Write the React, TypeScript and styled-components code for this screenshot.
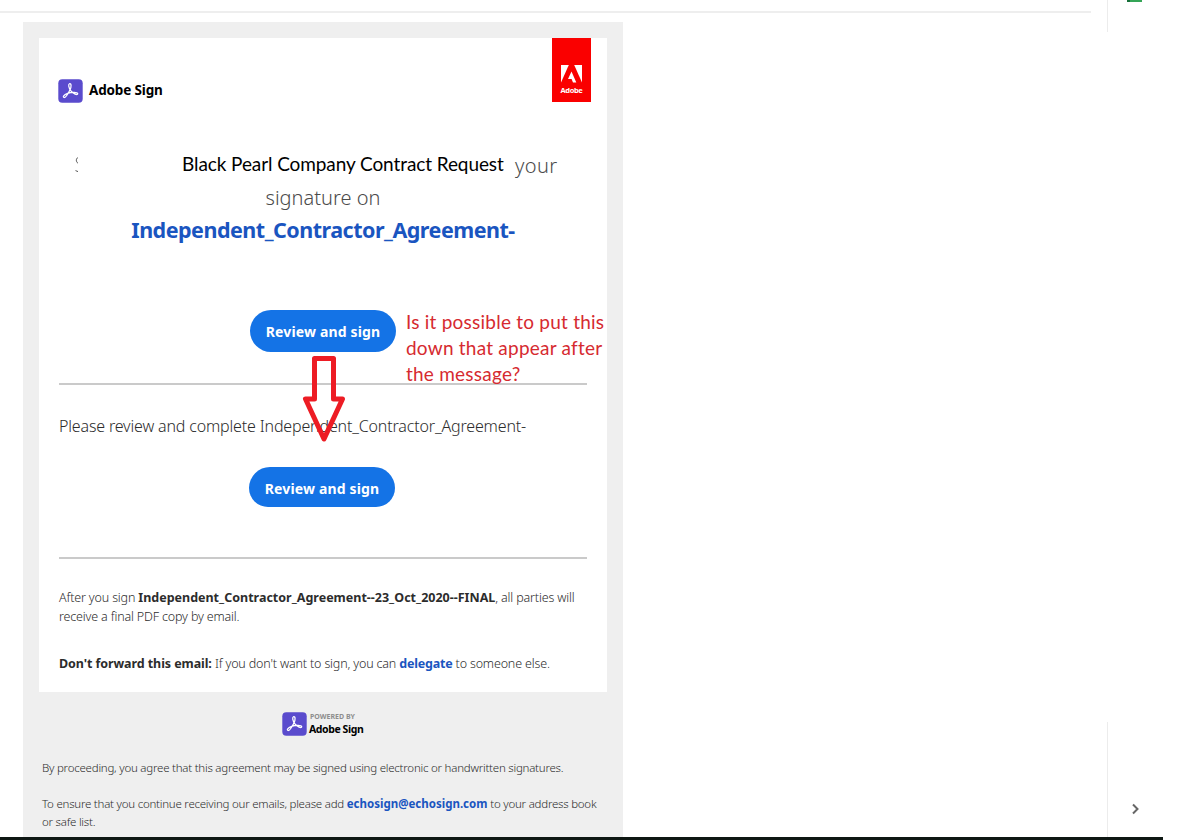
import React from 'react';
import styled, { createGlobalStyle } from 'styled-components';

const GlobalStyle = createGlobalStyle`
  * {
    box-sizing: border-box;
  }

  body {
    margin: 0;
    overflow: hidden;
    background: #fff;
    font-family: "Noto Sans", "Open Sans", sans-serif;
    color: #2c2c2c;
  }
`;

const Screen = styled.div`
  display: grid;
  grid-template-columns: 1107px 57px;
  grid-template-rows: 837px 3px;
  width: 1204px;
  height: 840px;
  overflow: hidden;
`;

const Main = styled.main`
  padding-top: 11px;
  overflow: hidden;
`;

const TopRule = styled.div`
  width: 1091px;
  height: 2px;
  background: #eee;
`;

const Email = styled.section`
  width: 600px;
  height: 815px;
  margin: 9px 0 0 23px;
  padding: 16px;
  background: #efefef;
`;

const Card = styled.article`
  position: relative;
  height: 654px;
  padding: 0 20px;
  background: #fff;
`;

const CardHeader = styled.header`
  display: flex;
  justify-content: space-between;
  height: 112px;
  margin: 0 -4px 0 -1px;
`;

const Brand = styled.div`
  display: flex;
  align-items: center;
  gap: 6px;
  height: 24px;
  margin-top: 41px;
`;

const BrandName = styled.span<{ $size: number; $spacing: number; $lift?: number }>`
  padding-bottom: ${({ $lift = 0 }) => $lift}px;
  font-size: ${({ $size }) => $size}px;
  line-height: 14px;
  font-weight: 700;
  letter-spacing: ${({ $spacing }) => $spacing}px;
  white-space: nowrap;
  color: #000;
`;

const AdobeTag = styled.div`
  display: flex;
  flex-direction: column;
  align-items: center;
  width: 39px;
  height: 64px;
  padding-top: 27px;
  background: #fa0000;
  color: #fff;
`;

const AdobeWord = styled.span`
  margin-top: 2px;
  font-size: 7.5px;
  line-height: 10px;
  font-weight: 700;
  letter-spacing: -0.4px;
`;

const Title = styled.h1`
  display: flex;
  flex-direction: column;
  height: 160px;
  margin: 0;
  font-size: 20px;
  line-height: 32px;
  font-weight: 300;
  color: #4b4b4b;
`;

const TitleRow = styled.span<{ $center?: boolean }>`
  display: flex;
  justify-content: ${({ $center }) => ($center ? 'center' : 'flex-start')};
  height: 32px;
  white-space: nowrap;
`;

const CutLetter = styled.svg`
  flex: none;
  margin: 6px 104px 0 15px;
`;

const Sender = styled.span`
  width: 333px;
  font-family: Lato, sans-serif;
  font-size: 19px;
  line-height: 28px;
  font-weight: 400;
  letter-spacing: -0.09px;
  color: #000;
`;

const Your = styled.span`
  letter-spacing: 0.4px;
`;

const DocumentLink = styled.a`
  font-size: 21.5px;
  line-height: 31px;
  font-weight: 700;
  letter-spacing: -0.5px;
  color: #1a55c0;
`;

const Button = styled.button<{ $cut?: boolean }>`
  display: block;
  width: 146px;
  height: ${({ $cut }) => ($cut ? 40 : 42)}px;
  margin: 0 auto 0 ${({ $cut }) => ($cut ? 190 : 191)}px;
  padding: ${({ $cut }) => ($cut ? 2 : 1)}px 0 0;
  border: 0;
  border-radius: ${({ $cut }) => ($cut ? '21px 21px 19px 19px' : '21px')};
  background: #1473e6;
  color: #fff;
  font-family: inherit;
  font-size: 14px;
  line-height: 40px;
  font-weight: 700;
  letter-spacing: 0.15px;
  white-space: nowrap;
`;

const Divider = styled.hr<{ $top: number }>`
  height: 2px;
  margin: ${({ $top }) => $top}px 0 0;
  border: 0;
  background: #cacaca;
`;

const Message = styled.p`
  height: 82px;
  margin: 0;
  padding-top: 29px;
  font-size: 16px;
  line-height: 24px;
  font-weight: 300;
  letter-spacing: -0.16px;
  white-space: nowrap;
`;

const Strong = styled.b<{ $spacing?: number }>`
  font-weight: 700;
  letter-spacing: ${({ $spacing = 0 }) => $spacing}px;
`;

const Link = styled(Strong).attrs({ as: 'a' })`
  color: #1a55c0;
`;

const Line = styled.span`
  display: block;
`;

const Note = styled.p<{ $top: number }>`
  margin: ${({ $top }) => $top}px 0 0;
  font-size: 12.5px;
  line-height: 19px;
  font-weight: 300;
  letter-spacing: -0.16px;
  white-space: nowrap;
`;

const Footer = styled.footer`
  padding: 19px 3px 0;
  font-size: 11.5px;
  line-height: 18px;
  font-weight: 300;
  letter-spacing: -0.23px;
  white-space: nowrap;
`;

const Powered = styled.div`
  display: flex;
  align-items: center;
  gap: 2px;
  height: 25px;
  margin: 0 0 23px 240px;
`;

const PoweredText = styled.div`
  display: flex;
  flex-direction: column;
`;

const PoweredBy = styled.span`
  padding-left: 1px;
  font-size: 7px;
  line-height: 10px;
  font-weight: 700;
  color: #8d8d8d;
  letter-spacing: 0;
`;

const FootText = styled.p`
  margin: 0 0 18px;
`;

const Remark = styled.div`
  position: absolute;
  top: 271px;
  left: 367px;
  font-family: Lato, sans-serif;
  font-size: 19px;
  line-height: 26px;
  letter-spacing: 0.23px;
  white-space: nowrap;
  color: #d62a30;
`;

const Arrow = styled.svg`
  position: absolute;
  top: 317px;
  left: 263px;
`;

const Rail = styled.aside`
  display: flex;
  flex-direction: column;
  justify-content: space-between;
`;

const RailPart = styled.div<{ $height: number }>`
  display: flex;
  flex-direction: column;
  justify-content: space-between;
  height: ${({ $height }) => $height}px;
  border-left: 1px solid #ececec;
`;

const GreenTab = styled.div`
  width: 15px;
  height: 2px;
  margin-left: 19px;
  border-left: 3px solid #17703a;
  background: #35a557;
`;

const Chevron = styled.svg`
  margin: auto 0 21px 22px;
`;

const Taskbar = styled.div`
  grid-column: 1 / 3;
  width: 1163px;
  background: #0e1713;
`;

const SignLogo: React.FC = () => (
  <svg width="25" height="24" viewBox="0 0 25 24" fill="none">
    <rect x="0.3" y="0.2" width="24.4" height="23.6" rx="4" fill="#5a4bcd" />
    <path
      d="M11.4 4.8C13.6 3.9 13.4 8 12 10.8C10.6 13.5 8.2 18.7 6.2 18.5C4.4 18 5.6 15.8 9.6 14.4C12.6 13.4 19.2 12.4 19.7 14.7C19.7 16.7 15.1 14.7 12.7 11.6C10.7 9 10.1 5.4 11.4 4.8Z"
      stroke="#fff"
      strokeWidth="1.25"
      strokeLinejoin="round"
    />
  </svg>
);

const AdobeMark: React.FC = () => (
  <svg width="21" height="18" viewBox="0 0 21 18" fill="#fff">
    <path d="M0 0H7.8L0 17.6Z" />
    <path d="M13.2 0H21V17.6Z" />
    <path d="M10.5 6.5L15.3 17.6H12L10.6 14.1H7Z" />
  </svg>
);

const App: React.FC = () => {
  return (
    <>
      <GlobalStyle />
      <Screen>
        <Main>
          <TopRule />
          <Email>
            <Card>
              <CardHeader>
                <Brand>
                  <SignLogo />
                  <BrandName $size={13.5} $spacing={-0.15} $lift={2}>Adobe Sign</BrandName>
                </Brand>
                <AdobeTag>
                  <AdobeMark />
                  <AdobeWord>Adobe</AdobeWord>
                </AdobeTag>
              </CardHeader>

              <Title>
                <TitleRow>
                  <CutLetter width="4" height="18" viewBox="0 0 4 18" fill="none" stroke="#555">
                    <path d="M4 1.5C2 2.5 1.6 5.5 4 7.3" />
                    <path d="M1.5 14.6L4 15.6" />
                  </CutLetter>
                  <Sender>Black Pearl Company Contract Request</Sender>
                  <Your>your</Your>
                </TitleRow>
                <TitleRow $center>signature on</TitleRow>
                <TitleRow $center>
                  <DocumentLink>Independent_Contractor_Agreement-</DocumentLink>
                </TitleRow>
              </Title>

              <Button>Review and sign</Button>
              <Divider $top={31} />
              <Message>Please review and complete Independent_Contractor_Agreement-</Message>
              <Button $cut>Review and sign</Button>
              <Divider $top={50} />

              <Note $top={29}>
                <Line>
                  After you sign <Strong>Independent_Contractor_Agreement--23_Oct_2020--FINAL</Strong>, all parties will
                </Line>
                <Line>receive a final PDF copy by email.</Line>
              </Note>
              <Note $top={28}>
                <Strong $spacing={-0.08}>Don't forward this email:</Strong> If you don't want to sign, you can{' '}
                <Link $spacing={-0.2}>delegate</Link> to someone else.
              </Note>

              <Remark>
                <Line>Is it possible to put this</Line>
                <Line>down that appear after</Line>
                <Line>the message?</Line>
              </Remark>
              <Arrow width="44" height="88" viewBox="0 0 44 88" fill="none">
                <path
                  d="M12.5 3.5H31.5V44H40.5L22 84L3.5 44H12.5Z"
                  stroke="#ed1c24"
                  strokeWidth="5"
                  strokeLinejoin="round"
                />
              </Arrow>
            </Card>

            <Footer>
              <Powered>
                <SignLogo />
                <PoweredText>
                  <PoweredBy>POWERED BY</PoweredBy>
                  <BrandName $size={10.5} $spacing={-0.42}>Adobe Sign</BrandName>
                </PoweredText>
              </Powered>
              <FootText>
                By proceeding, you agree that this agreement may be signed using electronic or handwritten signatures.
              </FootText>
              <FootText>
                <Line>
                  To ensure that you continue receiving our emails, please add <Link>echosign@echosign.com</Link> to your address book
                </Line>
                <Line>or safe list.</Line>
              </FootText>
            </Footer>
          </Email>
        </Main>

        <Rail>
          <RailPart $height={32}>
            <GreenTab />
          </RailPart>
          <RailPart $height={115}>
            <Chevron width="12" height="14" viewBox="0 0 12 14" fill="none">
              <path d="M3 2.5L7.5 7L3 11.5" stroke="#666" strokeWidth="2" />
            </Chevron>
          </RailPart>
        </Rail>
        <Taskbar />
      </Screen>
    </>
  );
};

export default App;
